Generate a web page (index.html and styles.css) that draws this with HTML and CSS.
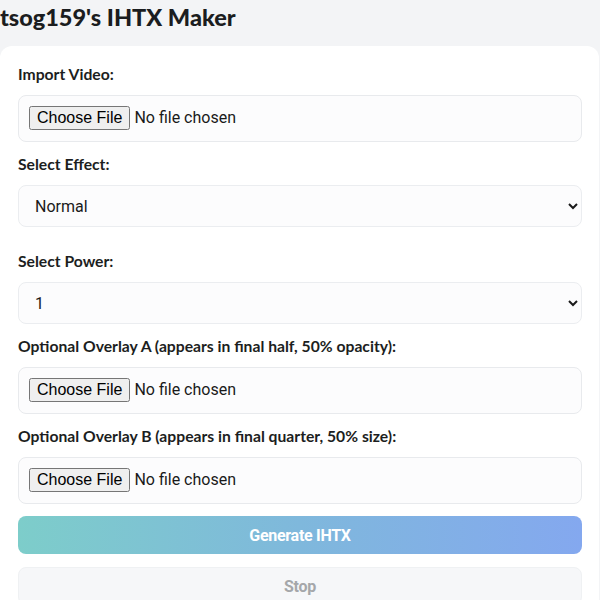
FILE: index.html
```html
<!DOCTYPE html>
<html lang="en">
<head>
<meta charset="utf-8">
<title>tsog159's IHTX Maker</title>
<link rel="stylesheet" href="styles.css">
</head>
<body>
<div class="page">
  <h1 class="title">tsog159's IHTX Maker</h1>
  <div class="card">
    <div class="field">
      <label class="label" for="video">Import Video:</label>
      <input class="file" id="video" type="file" accept="video/*">
    </div>
    <div class="field field-wide">
      <label class="label" for="effect">Select Effect:</label>
      <select class="select" id="effect">
        <option>Normal</option>
      </select>
    </div>
    <div class="field">
      <label class="label" for="power">Select Power:</label>
      <select class="select" id="power">
        <option>1</option>
      </select>
    </div>
    <div class="field">
      <label class="label" for="overlayA">Optional Overlay A (appears in final half, 50% opacity):</label>
      <input class="file" id="overlayA" type="file">
    </div>
    <div class="field">
      <label class="label" for="overlayB">Optional Overlay B (appears in final quarter, 50% size):</label>
      <input class="file" id="overlayB" type="file">
    </div>
    <button class="btn btn-primary" type="button">Generate IHTX</button>
    <button class="btn btn-stop" type="button" disabled>Stop</button>
  </div>
</div>
</body>
</html>
```

FILE: styles.css
```css
html, body {
  margin: 0;
  padding: 0;
  background: #f3f4f6;
}

.page {
  width: 600px;
  font-family: Lato, "Liberation Sans", sans-serif;
  color: #1c1e21;
}

.title {
  margin: 0;
  padding: 2px 0 0 0;
  height: 44px;
  font-size: 23.5px;
  line-height: 30px;
  font-weight: 900;
  color: #1b1d20;
}

.card {
  background: #ffffff;
  width: 599px;
  border-radius: 12px;
  padding: 18px 17px 40px 18px;
  box-sizing: border-box;
}

.field {
  margin-bottom: 12px;
}

.field-wide {
  margin-bottom: 24px;
}

.label {
  display: block;
  font-size: 15.7px;
  line-height: 20px;
  font-weight: 700;
  margin-bottom: 11px;
  color: #1c1e21;
}

.file {
  display: block;
  width: 100%;
  box-sizing: border-box;
  height: 47px;
  padding: 10px 10px;
  border: 1px solid #e8eaed;
  border-radius: 8px;
  background: #fcfcfd;
  font-family: Roboto, "Liberation Sans", sans-serif;
  font-size: 16px;
  color: #1a1a1a;
}

.select {
  display: block;
  width: 100%;
  box-sizing: border-box;
  height: 42px;
  padding: 0 12px;
  border: 1px solid #ebedf0;
  border-radius: 8px;
  background: #fcfcfd;
  font-family: Roboto, "Liberation Sans", sans-serif;
  font-size: 16px;
  color: #1a1a1a;
}

.btn {
  display: block;
  width: 100%;
  height: 38px;
  border-radius: 8px;
  font-family: Roboto, "Liberation Sans", sans-serif;
  font-size: 16px;
  font-weight: 700;
  letter-spacing: -0.3px;
}

.btn-primary {
  margin-top: 1px;
  border: none;
  color: #ffffff;
  background: linear-gradient(90deg, #7dcdca 0%, #7fb8dc 50%, #84a8ef 100%);
}

.btn-stop {
  margin-top: 13px;
  border: 1px solid #eff1f3;
  background: #f6f7f9;
  color: #a5a7aa;
}
```
